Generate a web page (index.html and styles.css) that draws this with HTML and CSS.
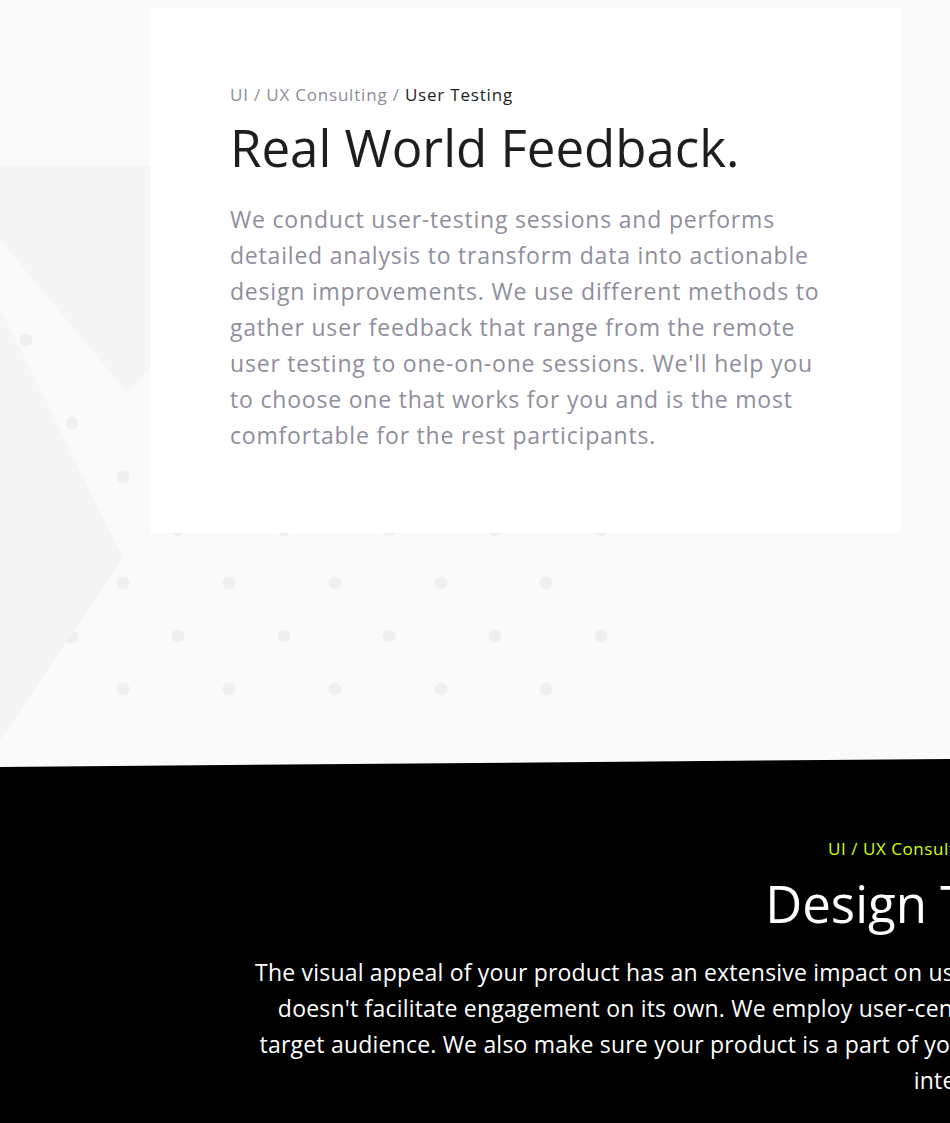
FILE: index.html
```html
<!DOCTYPE html>
<html lang="en">
<head>
<meta charset="utf-8">
<title>User Testing</title>
<link rel="stylesheet" href="styles.css">
</head>
<body>
<section class="hero">
  <svg class="hero-bg" width="950" height="780" viewBox="0 0 950 780" aria-hidden="true">
    <g fill="#efefef">
      <circle cx="26" cy="340" r="6.5"/>
      <circle cx="72" cy="423" r="6.5"/>
      <circle cx="123" cy="370" r="6.5"/>
      <circle cx="123" cy="477" r="6.5"/>
      <circle cx="72" cy="530" r="6.5"/>
      <circle cx="178" cy="530" r="6.5"/>
      <circle cx="284" cy="530" r="6.5"/>
      <circle cx="389" cy="530" r="6.5"/>
      <circle cx="495" cy="530" r="6.5"/>
      <circle cx="601" cy="530" r="6.5"/>
      <circle cx="123" cy="583" r="6.5"/>
      <circle cx="229" cy="583" r="6.5"/>
      <circle cx="335" cy="583" r="6.5"/>
      <circle cx="441" cy="583" r="6.5"/>
      <circle cx="546" cy="583" r="6.5"/>
      <circle cx="72" cy="637" r="6.5"/>
      <circle cx="178" cy="636" r="6.5"/>
      <circle cx="284" cy="636" r="6.5"/>
      <circle cx="389" cy="636" r="6.5"/>
      <circle cx="495" cy="636" r="6.5"/>
      <circle cx="601" cy="636" r="6.5"/>
      <circle cx="123" cy="689" r="6.5"/>
      <circle cx="229" cy="689" r="6.5"/>
      <circle cx="335" cy="689" r="6.5"/>
      <circle cx="441" cy="689" r="6.5"/>
      <circle cx="546" cy="689" r="6.5"/>
    </g>
    <polygon fill="#f5f5f5" points="0,166 300,166 300,200 127,393 0,240"/>
    <polygon fill="#f5f5f5" points="0,307 123,558 0,740"/>
    <polygon fill="#f3f3f3" opacity="0.5" points="0,553 123,558 0,740"/>
  </svg>
  <article class="card">
    <p class="crumbs">UI / UX Consulting / <span class="crumbs-current">User Testing</span></p>
    <h1 class="card-title">Real World Feedback.</h1>
    <p class="card-text">We conduct user-testing sessions and performs<br>detailed analysis to transform data into actionable<br>design improvements. We use different methods to<br>gather user feedback that range from the remote<br>user testing to one-on-one sessions. We'll help you<br>to choose one that works for you and is the most<br>comfortable for the rest participants.</p>
  </article>
</section>
<section class="dark">
  <div class="dark-inner">
    <p class="dark-crumbs">UI / UX Consulting / Design Trends</p>
    <h2 class="dark-title">Design Trends.</h2>
    <p class="dark-text">The visual appeal of your product has an extensive impact on users, but beauty<br>doesn't facilitate engagement on its own. We employ user-centered design to<br>target audience. We also make sure your product is a part of your brand's total<br>interactive system.</p>
  </div>
</section>
</body>
</html>
```

FILE: styles.css
```css
* { box-sizing: border-box; }

html, body {
  margin: 0;
  padding: 0;
}

body {
  width: 950px;
  height: 1123px;
  overflow: hidden;
  background: #fafafa;
  font-family: "Open Sans", "Noto Sans", sans-serif;
}

.hero {
  position: relative;
  height: 759px;
  padding-top: 8px;
}

.hero-bg {
  position: absolute;
  left: 0;
  top: 0;
}

.card {
  position: relative;
  margin-left: 150px;
  width: 751px;
  height: 525px;
  background: #ffffff;
  padding: 75px 0 0 80px;
}

.crumbs {
  margin: 0;
  font-size: 17px;
  line-height: 24px;
  color: #8d8d99;
  letter-spacing: 0.8px;
}

.crumbs-current {
  color: #1e1e1e;
}

.card-title {
  margin: 10px 0 0;
  font-size: 51px;
  line-height: 60px;
  font-weight: 400;
  color: #1e1e1e;
  letter-spacing: 0;
}

.card-text {
  margin: 24px 0 0;
  font-size: 23px;
  line-height: 36px;
  color: #8f8e9c;
  letter-spacing: 0.8px;
  white-space: nowrap;
}

.dark {
  position: relative;
  height: 364px;
  background: #000000;
  clip-path: polygon(0 8px, 100% 0, 100% 100%, 0 100%);
  overflow: hidden;
}

.dark-inner {
  width: 960px;
  margin-left: 158px;
  padding-top: 78px;
  text-align: right;
  white-space: nowrap;
}

.dark-crumbs {
  margin: 0;
  font-size: 17px;
  line-height: 24px;
  color: #d4ff00;
  letter-spacing: 0.55px;
}

.dark-title {
  margin: 12px 0 0;
  font-size: 51px;
  line-height: 60px;
  font-weight: 400;
  color: #ffffff;
}

.dark-text {
  margin: 21px 0 0;
  font-size: 23px;
  line-height: 36px;
  color: #ffffff;
  letter-spacing: 0.2px;
}
```
